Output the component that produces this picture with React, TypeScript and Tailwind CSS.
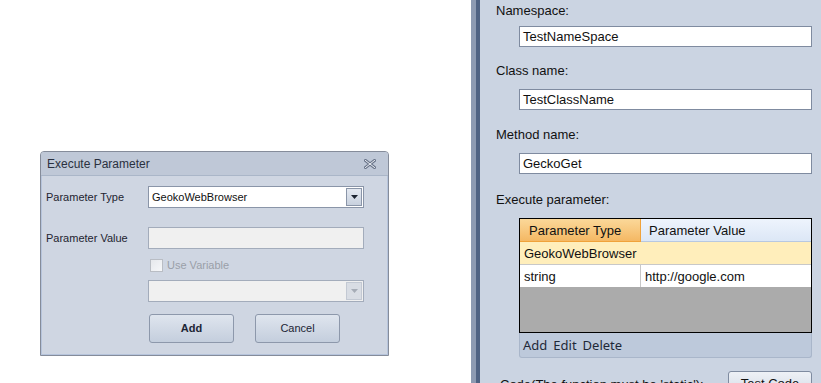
function ComboArrow({ disabled }: { disabled?: boolean }) {
  return (
    <div
      className={
        "absolute right-[1px] top-[1px] w-[16px] h-[18px] border flex items-center justify-center " +
        (disabled ? "border-[#c3c9d3] bg-[#d9dde4]" : "border-[#8a95a8] bg-gradient-to-b from-[#e4e9f1] to-[#c8d1de]")
      }
    >
      <svg width="7" height="4" viewBox="0 0 7 4">
        <path d="M0 0h7L3.5 4z" fill={disabled ? "#a6acb6" : "#1b2330"} />
      </svg>
    </div>
  );
}

function CloseIcon() {
  return (
    <svg width="12" height="10" viewBox="0 0 12 10">
      <path d="M1.5 1.5l9 7M10.5 1.5l-9 7" stroke="#6b768b" strokeWidth="3" strokeLinecap="square" />
      <path d="M1.5 1.5l9 7M10.5 1.5l-9 7" stroke="#eef1f6" strokeWidth="1" strokeLinecap="square" />
    </svg>
  );
}

function ExecuteParameterDialog() {
  return (
    <div className="w-[349px] h-[205px] border border-[#858c9a] rounded-t-[4px] bg-[#cfd6e2] flex flex-col font-['Liberation_Sans',sans-serif] text-[11px] text-[#1e2430]">
      <div className="h-[24px] shrink-0 bg-[#bfc8d7] border-b border-[#aab6c8] rounded-t-[3px] flex items-center justify-between pl-[6px] pr-[12px]">
        <span className="text-[12px] text-[#2a3140]">Execute Parameter</span>
        <CloseIcon />
      </div>
      <div className="flex-1 border-x border-b border-[#b6c4dc] flex flex-col pl-[4px] pt-[10px]">
        <div className="flex items-center h-[22px]">
          <span className="w-[102px]">Parameter Type</span>
          <div className="relative w-[216px] h-[22px] bg-white border border-[#8a95a8] flex items-center pl-[3px] text-[#111]">
            GeokoWebBrowser
            <ComboArrow />
          </div>
        </div>
        <div className="flex items-center h-[22px] mt-[19px]">
          <span className="w-[102px]">Parameter Value</span>
          <div className="w-[216px] h-[22px] bg-[#f0f0f0] border border-[#a3acbb]" />
        </div>
        <div className="flex items-center h-[14px] mt-[9px] pl-[104px] text-[#9a9fa8]">
          <div className="w-[13px] h-[13px] border border-[#b9bdc4] bg-gradient-to-br from-[#e6e8ec] to-[#f6f7f9]" />
          <span className="ml-[4px]">Use Variable</span>
        </div>
        <div className="relative w-[216px] h-[22px] ml-[102px] mt-[8px] bg-[#f0f0f0] border border-[#a3acbb]">
          <ComboArrow disabled />
        </div>
        <div className="flex ml-[103px] mt-[12px] gap-[21px]">
          <div className="w-[85px] h-[29px] rounded-[3px] border border-[#8d98ab] bg-gradient-to-b from-[#dfe5ee] to-[#c4cedd] flex items-center justify-center font-bold text-[#1c2535]">
            Add
          </div>
          <div className="w-[85px] h-[29px] rounded-[3px] border border-[#8d98ab] bg-gradient-to-b from-[#dfe5ee] to-[#c4cedd] flex items-center justify-center text-[#1c2535]">
            Cancel
          </div>
        </div>
      </div>
    </div>
  );
}

function TextBox({ value }: { value: string }) {
  return (
    <div className="ml-[39px] mr-[9px] h-[21px] bg-white border border-[#7f8ba0] flex items-center pl-[3px] text-[#111]">
      {value}
    </div>
  );
}

function ParamGrid() {
  return (
    <div className="ml-[39px] mr-[9px] border border-black bg-[#ababab] h-[115px] flex flex-col text-[13px]">
      <div className="h-[23px] flex shrink-0">
        <div className="w-[121px] bg-gradient-to-b from-[#fbd899] to-[#f4b863] border-r border-b border-[#f0a23a] flex items-center pl-[9px]">
          Parameter Type
        </div>
        <div className="flex-1 bg-gradient-to-b from-[#eef4fd] to-[#dce7f6] border-b border-[#b8c8e0] flex items-center pl-[8px]">
          Parameter Value
        </div>
      </div>
      <div className="h-[23px] shrink-0 bg-[#ffeebb] border-b border-[#c8c8c8] flex items-center pl-[4px]">
        GeokoWebBrowser
      </div>
      <div className="h-[22px] shrink-0 bg-white flex">
        <div className="w-[121px] border-r border-[#c8c8c8] flex items-center pl-[4px]">string</div>
        <div className="flex-1 flex items-center pl-[4px]">http://google.com</div>
      </div>
    </div>
  );
}

export default function App() {
  return (
    <div className="w-[821px] h-[383px] overflow-hidden flex bg-white">
      <div className="w-[471px] shrink-0 pl-[40px] pt-[151px]">
        <ExecuteParameterDialog />
      </div>
      <div className="w-[5px] shrink-0 bg-[#8d9ab2]" />
      <div className="w-[4px] shrink-0 bg-[#4f6283]" />
      <div className="flex-1 bg-[#cbd4e2] flex flex-col font-['Liberation_Sans',sans-serif] text-[13px] leading-[15px] text-[#111] *:shrink-0">
        <div className="pl-[16px] mt-[3px]">Namespace:</div>
        <div className="mt-[8px]"><TextBox value="TestNameSpace" /></div>
        <div className="pl-[16px] mt-[16px]">Class name:</div>
        <div className="mt-[11px]"><TextBox value="TestClassName" /></div>
        <div className="pl-[16px] mt-[17px]">Method name:</div>
        <div className="mt-[11px]"><TextBox value="GeckoGet" /></div>
        <div className="pl-[16px] mt-[18px]">Execute parameter:</div>
        <div className="mt-[11px]"><ParamGrid /></div>
        <div className="ml-[39px] mr-[9px] h-[25px] bg-[#bdc9db] border-b border-x border-[#a9b6ca] rounded-b-[3px] flex items-center pl-[3px] gap-[6px] font-['Noto_Sans',sans-serif] text-[13px] text-[#1e2838]">
          <span>Add</span>
          <span>Edit</span>
          <span>Delete</span>
        </div>
        <div className="flex items-start mt-[13px] pl-[20px] pr-[9px]">
          <span className="mt-[6px]">Code(The function must be 'static'):</span>
          <div className="ml-auto w-[84px] h-[24px] rounded-[3px] border border-[#7f8ba0] bg-gradient-to-b from-[#eef1f6] to-[#d5dce7] flex items-center justify-center">
            Test Code
          </div>
        </div>
      </div>
    </div>
  );
}
